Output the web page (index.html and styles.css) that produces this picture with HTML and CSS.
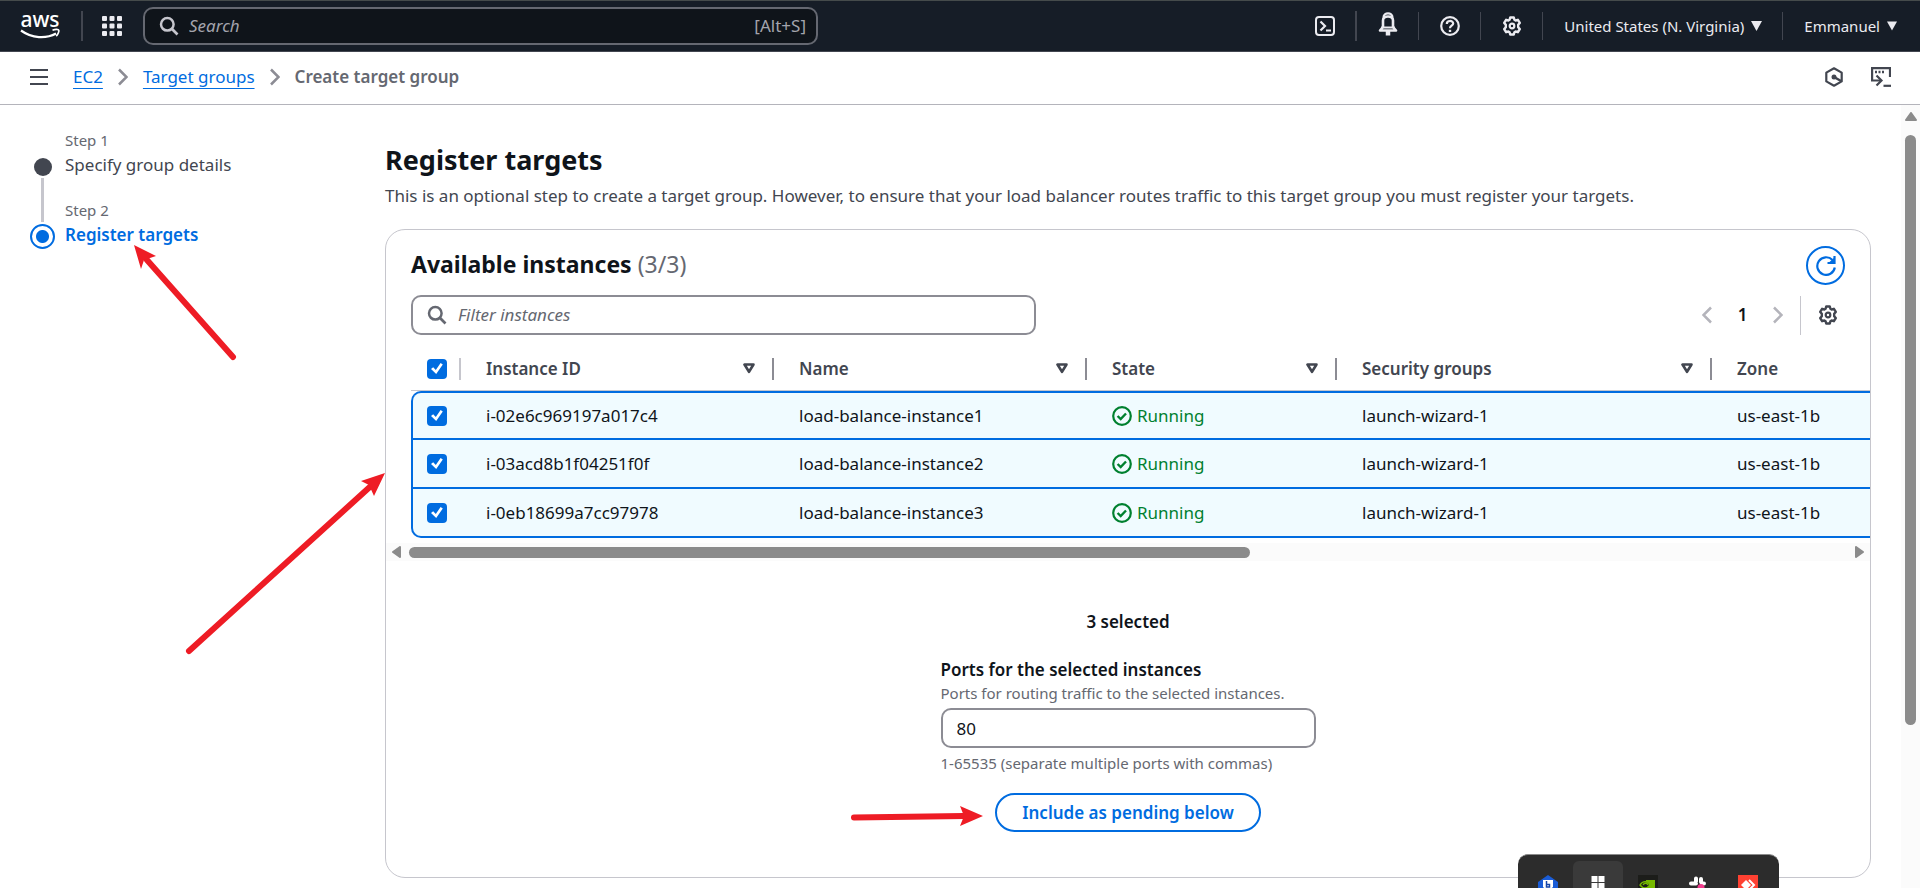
FILE: index.html
```html
<!DOCTYPE html>
<html lang="en">
<head>
<meta charset="utf-8">
<title>Create target group | EC2</title>
<link rel="stylesheet" href="styles.css">
</head>
<body>
<svg width="0" height="0" class="defs" aria-hidden="true">
  <defs>
    <symbol id="gear" viewBox="0 0 20 20"><path d="M8.2 1.5h3.6l.6 2.3 1.2.7 2.3-.7 1.9 3.1-1.6 1.8v2.6l1.6 1.8-1.9 3.1-2.3-.7-1.2.7-.6 2.3H8.2l-.6-2.3-1.2-.7-2.3.7-1.9-3.1 1.6-1.8V8.700L2.200 6.900l1.900-3.100 2.300.7 1.200-.7z" fill="none" stroke="currentColor" stroke-width="2.400" stroke-linejoin="round"/><circle cx="10" cy="10" r="2.300" fill="none" stroke="currentColor" stroke-width="2.200"/></symbol>
    <symbol id="search" viewBox="0 0 20 20"><circle cx="8.300" cy="8.300" r="6.300" fill="none" stroke="currentColor" stroke-width="2.500"/><path d="M12.800 12.800l5.700 5.700" stroke="currentColor" stroke-width="2.700"/></symbol>
    <symbol id="chev" viewBox="0 0 10 18"><path d="M1 1.500L8.500 9 1 16.500" fill="none" stroke="currentColor" stroke-width="2.500"/></symbol>
    <symbol id="sort" viewBox="0 0 12 11"><path d="M1.500 1.500h9L6 8.800z" fill="none" stroke="currentColor" stroke-width="2.600" stroke-linejoin="round"/></symbol>
    <symbol id="ok" viewBox="0 0 20 20"><circle cx="10" cy="10" r="8.800" fill="none" stroke="currentColor" stroke-width="2.200"/><path d="M5.600 10l3.100 3.100 5.300-5.600" fill="none" stroke="currentColor" stroke-width="2.400"/></symbol>
    <symbol id="caret" viewBox="0 0 11 10"><path d="M0 0h11L5.500 10z" fill="currentColor"/></symbol>
  </defs>
</svg>

<header class="topnav">
  <a class="logo" href="#" aria-label="AWS home">
    <svg width="48" height="44" viewBox="-4 -8 48 44"><text x="20" y="15" text-anchor="middle" class="logo-text">aws</text><path d="M1 18.500c11 8 25 8.500 35 3" fill="none" stroke="#fff" stroke-width="2.200"/><path d="M32.500 18.200c3-1.200 6-.9 6.300 0 .3 1.200-.8 4.300-2.600 6" fill="none" stroke="#fff" stroke-width="1.700"/></svg>
  </a>
  <span class="bar bar-thick"></span>
  <button class="icon-btn apps" aria-label="Services">
    <svg width="20" height="20" viewBox="0 0 20 20" fill="currentColor"><rect width="5" height="5" rx="1"/><rect x="7.500" width="5" height="5" rx="1"/><rect x="15" width="5" height="5" rx="1"/><rect y="7.500" width="5" height="5" rx="1"/><rect x="7.500" y="7.500" width="5" height="5" rx="1"/><rect x="15" y="7.500" width="5" height="5" rx="1"/><rect y="15" width="5" height="5" rx="1"/><rect x="7.500" y="15" width="5" height="5" rx="1"/><rect x="15" y="15" width="5" height="5" rx="1"/></svg>
  </button>
  <label class="nav-search">
    <svg width="20" height="20"><use href="#search"/></svg>
    <input type="search" placeholder="Search" aria-label="Search">
    <span class="hint">[Alt+S]</span>
  </label>
  <div class="nav-tools">
    <button class="icon-btn" aria-label="CloudShell"><svg width="20" height="20" viewBox="0 0 20 20" fill="none" stroke="currentColor" stroke-width="2"><rect x="1" y="1" width="18" height="18" rx="3"/><path d="M5.500 5.500L10 10l-4.500 4.500M11 14.500h5" stroke-width="2.200"/></svg></button>
    <span class="bar bar-thick"></span>
    <button class="icon-btn bell" aria-label="Notifications"><svg width="20" height="24" viewBox="0 0 20 24" fill="none" stroke="currentColor" stroke-width="2.600"><path d="M5 15V8.500c0-3 2-4 5-4s5 1 5 4V15l3 3.500H2z" stroke-linejoin="round"/><path d="M5.500 5.500c0-5.500 9-5.500 9 0" stroke-width="2.200"/><path d="M3 15.500h14" stroke-width="2"/><path d="M10 18v5.500" stroke-width="4.500"/></svg></button>
    <span class="bar"></span>
    <button class="icon-btn" aria-label="Support"><svg width="20" height="20" viewBox="0 0 20 20" fill="none" stroke="currentColor" stroke-width="2.200"><circle cx="10" cy="10" r="8.800"/><path d="M6.800 8c0-4 6.400-3.900 6.400-.5 0 2.200-3.200 2.300-3.200 4.700"/><path d="M10 13.800v2.200" stroke-width="2.400"/></svg></button>
    <span class="bar"></span>
    <button class="icon-btn" aria-label="Settings"><svg width="20" height="20"><use href="#gear"/></svg></button>
    <span class="bar"></span>
    <button class="nav-menu">United States (N. Virginia) <svg width="11" height="10"><use href="#caret"/></svg></button>
    <span class="bar"></span>
    <button class="nav-menu">Emmanuel <svg width="10" height="10"><use href="#caret"/></svg></button>
  </div>
</header>

<nav class="crumbs" aria-label="Breadcrumbs">
  <button class="icon-btn menu" aria-label="Menu"><svg width="18" height="16" viewBox="0 0 18 16" stroke="currentColor" stroke-width="2"><path d="M0 1h18M0 8h18M0 15h18"/></svg></button>
  <a href="#">EC2</a>
  <svg width="10" height="18"><use href="#chev"/></svg>
  <a href="#">Target groups</a>
  <svg width="10" height="18"><use href="#chev"/></svg>
  <b>Create target group</b>
  <div class="crumb-tools">
    <button class="icon-btn" aria-label="Amazon Q"><svg width="18" height="20" viewBox="0 0 18 20" fill="none" stroke="currentColor" stroke-width="2.200"><path d="M9 1.300l7.700 4.300v8.800L9 18.700l-7.700-4.300V5.600z" stroke-linejoin="round"/><path d="M9 10l7 4" stroke-width="2.400"/><circle cx="9" cy="10" r="2.500" fill="currentColor" stroke="none"/></svg></button>
    <button class="icon-btn" aria-label="Open terminal"><svg width="20" height="20" viewBox="0 0 20 20" fill="none" stroke="currentColor" stroke-width="2.200"><path d="M19 10V1.200H1.100v12.300H10"/><path d="M5.500 8.500l5 5-5 5"/><path d="M12.500 18.800H20"/><path d="M4 5h2m1.500 0h2M11 5h2" stroke-width="2.400"/></svg></button>
  </div>
</nav>

<div class="body">
  <aside class="steps">
    <ol>
      <li>
        <span class="rail"><i class="dot"></i><i class="line"></i></span>
        <span class="step"><small>Step 1</small><a href="#">Specify group details</a></span>
      </li>
      <li class="current" aria-current="step">
        <span class="rail"><i class="dot"></i></span>
        <span class="step"><small>Step 2</small><b>Register targets</b></span>
      </li>
    </ol>
  </aside>

  <main>
    <h1>Register targets</h1>
    <p class="lead">This is an optional step to create a target group. However, to ensure that your load balancer routes traffic to this target group you must register your targets.</p>

    <section class="card">
      <div class="card-head">
        <h2>Available instances <span>(3/3)</span></h2>
        <button class="refresh" aria-label="Refresh"><svg width="20" height="20" viewBox="0 0 20 20" fill="none" stroke="currentColor" stroke-width="2.200"><path d="M18.800 11.500A8.800 8.800 0 1 1 16.500 4"/><path d="M18.500 0v7h-7"/><path d="M13.500 6l5-4.500V6z" fill="currentColor" stroke="none"/></svg></button>
      </div>
      <div class="filters">
        <label class="filter"><svg width="20" height="20"><use href="#search"/></svg><input type="search" placeholder="Filter instances" aria-label="Filter instances"></label>
        <div class="pager">
          <button class="icon-btn prev" aria-label="Previous page"><svg width="10" height="18"><use href="#chev"/></svg></button>
          <b>1</b>
          <button class="icon-btn" aria-label="Next page"><svg width="10" height="18"><use href="#chev"/></svg></button>
          <span class="sep"></span>
          <button class="icon-btn prefs" aria-label="Preferences"><svg width="20" height="20"><use href="#gear"/></svg></button>
        </div>
      </div>

      <div class="table-wrap">
        <table>
          <colgroup><col class="c-check"><col class="c-id"><col class="c-name"><col class="c-state"><col class="c-sg"><col></colgroup>
          <thead>
            <tr>
              <th><input type="checkbox" checked aria-label="Select all"></th>
              <th><div>Instance ID <svg width="12" height="11"><use href="#sort"/></svg></div></th>
              <th><div>Name <svg width="12" height="11"><use href="#sort"/></svg></div></th>
              <th><div>State <svg width="12" height="11"><use href="#sort"/></svg></div></th>
              <th><div>Security groups <svg width="12" height="11"><use href="#sort"/></svg></div></th>
              <th><div>Zone</div></th>
            </tr>
          </thead>
          <tbody>
            <tr>
              <td><input type="checkbox" checked aria-label="Select load-balance-instance1"></td>
              <td>i-02e6c969197a017c4</td><td>load-balance-instance1</td>
              <td><span class="state"><svg width="20" height="20"><use href="#ok"/></svg>Running</span></td>
              <td>launch-wizard-1</td><td>us-east-1b</td>
            </tr>
            <tr>
              <td><input type="checkbox" checked aria-label="Select load-balance-instance2"></td>
              <td>i-03acd8b1f04251f0f</td><td>load-balance-instance2</td>
              <td><span class="state"><svg width="20" height="20"><use href="#ok"/></svg>Running</span></td>
              <td>launch-wizard-1</td><td>us-east-1b</td>
            </tr>
            <tr>
              <td><input type="checkbox" checked aria-label="Select load-balance-instance3"></td>
              <td>i-0eb18699a7cc97978</td><td>load-balance-instance3</td>
              <td><span class="state"><svg width="20" height="20"><use href="#ok"/></svg>Running</span></td>
              <td>launch-wizard-1</td><td>us-east-1b</td>
            </tr>
          </tbody>
        </table>
      </div>
      <div class="hscroll" aria-hidden="true">
        <svg width="9" height="12" viewBox="0 0 9 12"><path d="M8 1v10L1 6z" fill="currentColor" stroke="currentColor" stroke-linejoin="round" stroke-width="2"/></svg>
        <span class="track"><i></i></span>
        <svg width="9" height="12" viewBox="0 0 9 12"><path d="M1 1v10l7-5z" fill="currentColor" stroke="currentColor" stroke-linejoin="round" stroke-width="2"/></svg>
      </div>

      <form class="ports">
        <b class="count">3 selected</b>
        <div class="field">
          <label for="ports">Ports for the selected instances</label>
          <small>Ports for routing traffic to the selected instances.</small>
          <input id="ports" type="text" value="80">
          <small>1-65535 (separate multiple ports with commas)</small>
        </div>
        <button type="button" class="include">Include as pending below</button>
      </form>
    </section>
  </main>

  <div class="vscroll" aria-hidden="true">
    <svg width="12" height="9" viewBox="0 0 12 9"><path d="M1 8h10L6 1z" fill="currentColor" stroke="currentColor" stroke-linejoin="round" stroke-width="2"/></svg>
    <i></i>
  </div>
</div>

<svg class="arrow arrow-step" width="106" height="118" viewBox="0 0 106 118"><path d="M102 113L16 16" class="shaft"/><path d="M3 1l22 11-12 4-3 9z" class="head"/></svg>
<svg class="arrow arrow-table" width="204" height="186" viewBox="0 0 204 186"><path d="M5 182L188 16" class="shaft"/><path d="M201 4l-24 8 8 4 5 11z" class="head"/></svg>
<svg class="arrow arrow-button" width="134" height="22" viewBox="0 0 134 22"><path d="M4 12.500L114 11" class="shaft"/><path d="M133 11L110 1l4 10-4 10z" class="head"/></svg>

<div class="taskbar">
  <span><svg width="20" height="20" viewBox="0 0 20 20"><path d="M0 7L10 0l10 7v12H0z" fill="#1a5cd6"/><path d="M5 5h10v7l-5 4-5-4z" fill="#fff"/><path d="M8.500 6v6h3V9.500h-3" fill="none" stroke="#1746a8" stroke-width="1.500"/></svg></span>
  <span class="active"><svg width="20" height="20" viewBox="0 0 20 20" fill="#fff"><path d="M3.500 1h6v6h-6zM10.500 1h6v6h-6zM3.500 8h6v6h-6zM10.500 8h6v6h-6z"/></svg></span>
  <span><svg width="20" height="20" viewBox="0 0 20 20"><path d="M0 0h20v20H0z" fill="#1c1d1a"/><path d="M8 5h9v9H8z" fill="#76b900"/><path d="M2 10c3-5 8-4 10 0-3 4-7 4-10 0zM5 10c1.500-2.500 4-2 5 0" fill="#1c1d1a" stroke="#76b900" stroke-width="1.400"/></svg></span>
  <span><svg width="20" height="20" viewBox="0 0 20 20" fill="none" stroke="#fff" stroke-width="4" stroke-linecap="round"><path d="M8 3.500v3M13 4v3M3 8.500h5M14 8.500h2"/><path d="M13 12.500v4" stroke="#f23c8d" stroke-width="7"/></svg></span>
  <span><svg width="20" height="20" viewBox="0 0 20 20"><path d="M0 0h20v20H0z" fill="#ff4132"/><path d="M8 5l5 5-5 5-5-5z" fill="#fff"/><path d="M11 5l5 5-5 5" fill="none" stroke="#fff" stroke-width="2"/></svg></span>
</div>
</body>
</html>
```
FILE: styles.css
```css
* { box-sizing: border-box; }
body {
  margin: 0;
  height: 100vh;
  display: flex;
  flex-direction: column;
  position: relative;
  overflow: hidden;
  background: #fff;
  color: #0f141a;
  font-family: "Noto Sans", "Open Sans", sans-serif;
  font-size: 17px;
  line-height: 24px;
}
button, input { font: inherit; color: inherit; }
button { cursor: pointer; }
svg { display: block; flex: none; }
a { color: #006ce0; }
.defs { position: absolute; }
.icon-btn { border: 0; background: none; padding: 0; display: flex; }

/* Top navigation */
.topnav {
  display: flex;
  align-items: center;
  flex: none;
  height: 52px;
  padding-left: 16px;
  background: #161d27;
  border-top: 1px solid #454b4b;
  border-bottom: 1px solid #424650;
  color: #ebebf0;
}
.logo { margin-right: 17px; }
.logo-text { font-size: 21px; fill: #fff; font-weight: 500; }
.bar { width: 1px; height: 28px; background: #424650; flex: none; }
.bar-thick { width: 2px; height: 30px; }
.apps { margin: 0 21px 0 19px; }
.nav-search {
  display: flex;
  align-items: center;
  flex: 0 1 675px;
  height: 38px;
  padding: 0 10px 0 14px;
  gap: 10px;
  border: 2px solid #656871;
  border-radius: 10px;
  background: #0f141a;
  color: #c6c6cd;
}
.nav-search input, .filter input {
  flex: 1;
  min-width: 0;
  border: 0;
  padding: 0;
  background: none;
  outline: 0;
}
input::placeholder { font-style: italic; opacity: 1; }
.nav-search input::placeholder { color: #a4a4ad; }
.hint { color: #a4a4ad; }
.nav-tools { display: flex; align-items: center; margin-left: auto; padding-right: 23px; gap: 21px; }
.nav-tools .bar { margin-left: -1px; }
.bell { margin-top: -4px; }
.nav-menu {
  display: flex;
  align-items: center;
  gap: 7px;
  padding: 0;
  border: 0;
  background: none;
  font-size: 15px;
  white-space: nowrap;
}

/* Breadcrumbs */
.crumbs {
  display: flex;
  align-items: center;
  flex: none;
  height: 53px;
  padding: 0 29px 2px 30px;
  gap: 15px;
  border-bottom: 1px solid #b4b4bb;
  color: #8c8c94;
}
.crumbs a { text-underline-offset: 5px; text-decoration-thickness: 1px; }
.crumbs b { color: #656871; font-weight: 600; }
.menu { margin-right: 10px; }
.crumb-tools { display: flex; gap: 28px; margin-left: auto; }
.crumbs .icon-btn { color: #424650; }

/* Page body */
.body { display: flex; flex: 1; min-height: 0; }
.steps { width: 385px; flex: none; padding: 24px 20px 0 30px; }
.steps ol { list-style: none; margin: 0; padding: 0; }
.steps li { display: flex; gap: 10px; min-height: 70px; }
.steps small, .field small { font-size: 15px; color: #656871; }
.steps small { line-height: 22px; margin-bottom: 2px; }
.step { display: flex; flex-direction: column; }
.step a { color: #424650; text-decoration: none; }
.step b { color: #006ce0; font-weight: 600; }
.rail { width: 25px; display: flex; flex-direction: column; align-items: center; padding-top: 29px; }
.dot { width: 18px; height: 18px; border-radius: 50%; background: #424650; flex: none; }
.line { width: 3px; height: 44px; margin: 2px 0 -24px; background: #c6c6cd; flex: none; }
.current .rail { padding-top: 25px; }
.current .dot {
  width: 25px;
  height: 25px;
  border: 2px solid #006ce0;
  background: radial-gradient(circle, #006ce0 6px, transparent 7px);
}

main { flex: 1; min-width: 0; padding: 37px 30px 0 0; }
h1 { margin: 0; font-size: 27px; line-height: 36px; font-weight: 700; }
.lead { margin: 6px 0 21px; color: #424650; }

.card { border: 1px solid #c6c6cd; border-radius: 20px; overflow: hidden; }
.card-head { display: flex; align-items: center; justify-content: space-between; padding: 16px 25px 10px; }
h2 { margin: 0; padding-bottom: 3px; font-size: 23px; line-height: 32px; font-weight: 700; }
h2 span { font-weight: 400; color: #656871; }
.refresh {
  display: grid;
  place-items: center;
  width: 39px;
  height: 39px;
  padding: 0;
  border: 2px solid #006ce0;
  border-radius: 50%;
  background: #fff;
  color: #006ce0;
}
.filters { display: flex; justify-content: space-between; align-items: center; padding: 0 32px 0 25px; }
.filter {
  display: flex;
  align-items: center;
  flex: 0 1 625px;
  height: 40px;
  padding: 0 14px;
  gap: 11px;
  border: 2px solid #8c8c94;
  border-radius: 10px;
  color: #656871;
}
.filter input::placeholder { color: #656871; }
.pager { display: flex; align-items: center; gap: 17px; color: #b4b4bb; }
.pager b { width: 27px; text-align: center; color: #0f141a; font-weight: 600; }
.prev { transform: scaleX(-1); }
.sep { width: 1px; height: 39px; background: #c6c6cd; }
.prefs { color: #424650; }

/* Instances table */
.table-wrap { padding: 12px 0 5px 25px; overflow: hidden; }
table { width: 100%; table-layout: fixed; border-collapse: separate; border-spacing: 0; }
.c-check { width: 50px; }
.c-id, .c-name { width: 313px; }
.c-state { width: 250px; }
.c-sg { width: 375px; }
th { height: 44px; padding: 0; border-bottom: 1px solid #c6c6cd; text-align: left; font-weight: 600; color: #424650; }
th div {
  display: flex;
  align-items: center;
  justify-content: space-between;
  height: 22px;
  padding: 0 17px 0 25px;
  border-right: 2px solid #8c8c94;
}
th:last-child div { border: 0; }
th:first-child { padding-left: 16px; background: linear-gradient(#c6c6cd, #c6c6cd) right center / 2px 22px no-repeat; }
td {
  height: 49px;
  padding: 0 0 0 25px;
  border-bottom: 2px solid #006ce0;
  background: #f0fbff;
  white-space: nowrap;
}
tbody tr:first-child td { border-top: 2px solid #006ce0; }
td:first-child { border-left: 2px solid #006ce0; padding-left: 14px; }
tbody tr:first-child td:first-child { border-top-left-radius: 10px; }
tbody tr:last-child td:first-child { border-bottom-left-radius: 10px; }
input[type="checkbox"] {
  appearance: none;
  display: block;
  width: 20px;
  height: 20px;
  margin: 0;
  border-radius: 4px;
  background: #006ce0;
}
input[type="checkbox"]::after {
  content: "";
  display: block;
  width: 20px;
  height: 20px;
  background: #fff;
  clip-path: polygon(20% 52%, 31% 44%, 44% 58%, 68% 22%, 79% 30%, 46% 77%);
}
.state { display: flex; align-items: center; gap: 5px; color: #00802f; }

.hscroll { display: flex; align-items: center; gap: 8px; height: 18px; padding: 0 6px; background: #fbfbfb; color: #8b8b8b; }
.track { flex: 1; }
.track i { display: block; width: 58.5%; height: 11px; border-radius: 6px; background: #8b8b8b; }

/* Port form */
.ports { display: flex; flex-direction: column; align-items: center; padding: 49px 25px 45px; }
.count { font-weight: 600; }
.field { display: flex; flex-direction: column; width: 375px; margin: 24px 0 19px; }
.field label { font-weight: 600; }
.field small { line-height: 22px; }
.field input {
  height: 40px;
  margin: 4px 0;
  padding: 0 14px;
  border: 2px solid #8c8c94;
  border-radius: 10px;
}
.include {
  height: 39px;
  padding: 0 25px;
  border: 2px solid #006ce0;
  border-radius: 20px;
  background: #fff;
  color: #006ce0;
  font-weight: 600;
}

.vscroll {
  width: 19px;
  flex: none;
  display: flex;
  flex-direction: column;
  align-items: center;
  padding-top: 7px;
  gap: 14px;
  background: #fbfbfb;
  color: #8b8b8b;
}
.vscroll i { width: 11px; height: 76%; border-radius: 6px; background: #8b8b8b; }

/* Annotation arrows over the page */
.arrow { position: absolute; pointer-events: none; }
.shaft { fill: none; stroke: #ee1c25; stroke-width: 6; stroke-linecap: round; }
.head { fill: #ee1c25; }
.arrow-step { left: 131px; top: 244px; }
.arrow-table { left: 184px; top: 469px; }
.arrow-button { left: 850px; top: 805px; }

/* Desktop tray over the page */
.taskbar {
  position: absolute;
  right: 141px;
  bottom: 0;
  display: flex;
  height: 34px;
  padding: 6px 6px 0 5px;
  border-top: 1px solid #8b8b8b;
  border-radius: 10px 10px 0 0;
  background: #2c2c2c;
  overflow: hidden;
}
.taskbar span { width: 50px; height: 48px; padding: 14px 15px; border-radius: 6px; }
.taskbar .active { background: #3a3a3a; }
```
